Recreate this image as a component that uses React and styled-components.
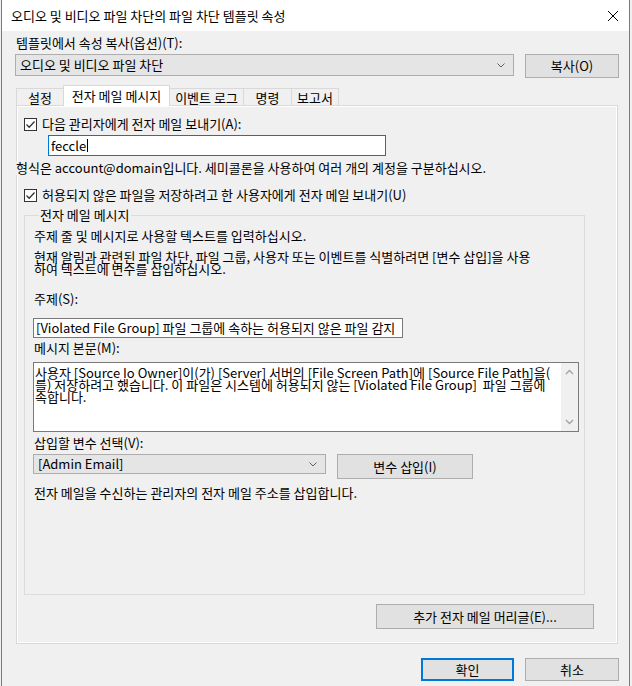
import React from "react";
import styled, { createGlobalStyle } from "styled-components";

const GlobalStyle = createGlobalStyle`
  html, body {
    margin: 0;
    padding: 0;
    background: #f0f0f0;
  }
  body {
    font-family: "Noto Sans CJK KR", "Noto Sans", sans-serif;
    font-size: 13px;
    color: #000;
  }
`;

const Window = styled.div`
  box-sizing: border-box;
  width: 629px;
  min-height: 686px;
  margin-left: 1px;
  border-left: 1px solid #7a7a7a;
  border-right: 1px solid #7a7a7a;
  background: #f0f0f0;
  display: flex;
  flex-direction: column;
`;

const TitleBar = styled.div`
  height: 31px;
  background: #fff;
  display: flex;
  align-items: center;
  justify-content: space-between;
  padding: 0 10px 0 9px;
  line-height: 14px;
`;

const CloseBox = styled.div`
  width: 10px;
  height: 10px;
  display: flex;
  margin-right: 1px;
`;

const Body = styled.div`
  padding: 5px 10px 0 13px;
  display: flex;
  flex-direction: column;
`;

const Text = styled.div`
  line-height: 14px;
  height: 14px;
  white-space: nowrap;
  margin-top: ${(p) => p.$top || 0}px;
  margin-left: ${(p) => p.$left || 0}px;
`;

const Row = styled.div`
  display: flex;
  align-items: flex-start;
  gap: ${(p) => p.$gap || 11}px;
  margin-top: ${(p) => p.$top || 0}px;
  margin-left: ${(p) => p.$left || 0}px;
`;

const Combo = styled.div`
  box-sizing: border-box;
  width: ${(p) => p.$w}px;
  height: ${(p) => p.$h || 21}px;
  background: #e5e5e5;
  border: 1px solid #adadad;
  display: flex;
  align-items: center;
  justify-content: space-between;
  padding: 0 8px 0 4px;
  line-height: 14px;
  svg {
    flex: none;
  }
`;

const Button = styled.div`
  box-sizing: border-box;
  width: ${(p) => p.$w}px;
  height: ${(p) => p.$h || 23}px;
  background: #e1e1e1;
  border: ${(p) => (p.$default ? "2px solid #0078d7" : "1px solid #adadad")};
  display: flex;
  align-items: center;
  justify-content: center;
  line-height: 14px;
  white-space: nowrap;
`;

const TabStrip = styled.div`
  display: flex;
  align-items: flex-end;
  height: 21px;
  margin: 7px 0 0 1px;
  position: relative;
  z-index: 1;
`;

const Tab = styled.div`
  box-sizing: border-box;
  width: ${(p) => p.$w}px;
  height: ${(p) => (p.$active ? 21 : 17)}px;
  margin-bottom: ${(p) => (p.$active ? 0 : 1)}px;
  margin-left: -1px;
  background: ${(p) => (p.$active ? "#fff" : "#f0f0f0")};
  border: 1px solid #d9d9d9;
  border-bottom: none;
  display: flex;
  align-items: center;
  justify-content: center;
  line-height: 14px;
  padding-top: ${(p) => (p.$active ? 0 : 2)}px;
  white-space: nowrap;
  &:first-child {
    margin-left: 0;
  }
`;

const Panel = styled.div`
  box-sizing: border-box;
  height: 539px;
  margin: -1px 1px 0 1px;
  border: 1px solid #d9d9d9;
  box-shadow: inset 0 0 0 1px #fff;
  padding: 11px 7px 0 7px;
  display: flex;
  flex-direction: column;
`;

const CheckRow = styled.div`
  display: flex;
  align-items: center;
  gap: 5px;
  height: 14px;
  line-height: 14px;
  margin-top: ${(p) => p.$top || 0}px;
  white-space: nowrap;
`;

const CheckBox = styled.div`
  box-sizing: border-box;
  width: 13px;
  height: 13px;
  border: 1px solid #333;
  background: #fff;
  display: flex;
  align-items: center;
  justify-content: center;
`;

const Field = styled.div`
  box-sizing: border-box;
  width: ${(p) => p.$w}px;
  height: ${(p) => p.$h}px;
  background: #fff;
  border: 1px solid ${(p) => (p.$focus ? "#0078d7" : "#7a7a7a")};
  margin-top: ${(p) => p.$top || 0}px;
  margin-left: ${(p) => p.$left || 0}px;
  padding: 0 2px;
  display: flex;
  align-items: center;
  line-height: 14px;
  white-space: nowrap;
  overflow: hidden;
`;

const Caret = styled.span`
  display: inline-block;
  width: 1px;
  height: 13px;
  background: #000;
  margin-left: 1px;
`;

const Hint = styled(Text)`
  background: #f0f0f0;
  position: relative;
  align-self: flex-start;
  padding-right: 2px;
`;

const Group = styled.fieldset`
  box-sizing: border-box;
  width: 561px;
  margin: 6px 0 0 0;
  padding: 7px 0 94px 9px;
  border: 1px solid #dcdcdc;
  display: flex;
  flex-direction: column;
`;

const Legend = styled.legend`
  padding: 0 1px;
  margin-left: 5px;
  line-height: 14px;
`;

const Paragraph = styled.div`
  line-height: 12px;
  margin-top: 8px;
  white-space: pre;
`;

const MessageBox = styled.div`
  box-sizing: border-box;
  width: 546px;
  height: 70px;
  margin: 7px 0 0 -1px;
  background: #fff;
  border: 1px solid #7a7a7a;
  display: flex;
`;

const MessageText = styled.div`
  flex: 1;
  padding: 4px 0 0 1px;
  line-height: 12px;
  white-space: pre;
  overflow: hidden;
`;

const ScrollBar = styled.div`
  width: 17px;
  flex: none;
  background: #f0f0f0;
  display: flex;
  flex-direction: column;
  justify-content: space-between;
  align-items: center;
  padding: 6px 0;
`;

const Footer = styled.div`
  display: flex;
  justify-content: flex-end;
  gap: 11px;
  margin-top: 14px;
`;

const Chevron = () => (
  <svg width="8" height="5" viewBox="0 0 8 5">
    <path d="M0.5 0.5 L4 4 L7.5 0.5" fill="none" stroke="#606060" strokeWidth="1" />
  </svg>
);

const Check = () => (
  <svg width="11" height="11" viewBox="0 0 11 11">
    <path d="M1.5 5.5 L4.2 8.2 L9.5 2.5" fill="none" stroke="#333" strokeWidth="1.3" />
  </svg>
);

const Arrow = ({ up }) => (
  <svg width="9" height="6" viewBox="0 0 9 6">
    <path
      d={up ? "M1 5 L4.5 1.5 L8 5" : "M1 1 L4.5 4.5 L8 1"}
      fill="none"
      stroke="#a3a3a3"
      strokeWidth="1.4"
    />
  </svg>
);

const tabs = [
  ["설정", 48],
  ["전자 메일 메시지", 107],
  ["이벤트 로그", 75],
  ["명령", 49],
  ["보고서", 48],
];

const messageLines = [
  "사용자 [Source Io Owner]이(가) [Server] 서버의 [File Screen Path]에 [Source File Path]을(",
  "를) 저장하려고 했습니다. 이 파일은 시스템에 허용되지 않는 [Violated File Group]  파일 그룹에",
  "속합니다.",
];

export default function App() {
  return (
    <>
      <GlobalStyle />
      <Window>
        <TitleBar>
          <span>오디오 및 비디오 파일 차단의 파일 차단 템플릿 속성</span>
          <CloseBox>
            <svg width="10" height="10" viewBox="0 0 10 10">
              <path d="M0 0 L10 10 M10 0 L0 10" stroke="#000" strokeWidth="1" />
            </svg>
          </CloseBox>
        </TitleBar>
        <Body>
          <Text $left={1}>템플릿에서 속성 복사(옵션)(T):</Text>
          <Row $top={4}>
            <Combo $w={499} $h={22}>
              <span>오디오 및 비디오 파일 차단</span>
              <Chevron />
            </Combo>
            <Button $w={94} $h={24}>복사(O)</Button>
          </Row>

          <TabStrip>
            {tabs.map(([label, w], i) => (
              <Tab key={label} $w={w} $active={i === 1}>
                {label}
              </Tab>
            ))}
          </TabStrip>

          <Panel>
            <CheckRow>
              <CheckBox>
                <Check />
              </CheckBox>
              <span>다음 관리자에게 전자 메일 보내기(A):</span>
            </CheckRow>
            <Field $w={338} $h={21} $top={4} $left={24} $focus>
              feccle
              <Caret />
            </Field>
            <Hint $top={5} $left={-8}>
              형식은 account@domain입니다. 세미콜론을 사용하여 여러 개의 계정을 구분하십시오.
            </Hint>
            <CheckRow $top={13}>
              <CheckBox>
                <Check />
              </CheckBox>
              <span>허용되지 않은 파일을 저장하려고 한 사용자에게 전자 메일 보내기(U)</span>
            </CheckRow>

            <Group>
              <Legend>전자 메일 메시지</Legend>
              <Text>주제 줄 및 메시지로 사용할 텍스트를 입력하십시오.</Text>
              <Paragraph>
                {"현재 알림과 관련된 파일 차단, 파일 그룹, 사용자 또는 이벤트를 식별하려면 [변수 삽입]을 사용\n하여 텍스트에 변수를 삽입하십시오."}
              </Paragraph>
              <Text $top={17}>주제(S):</Text>
              <Field $w={370} $h={20} $top={12} $left={-1}>
                [Violated File Group] 파일 그룹에 속하는 허용되지 않은 파일 감지
              </Field>
              <Text $top={3}>메시지 본문(M):</Text>
              <MessageBox>
                <MessageText>{messageLines.join("\n")}</MessageText>
                <ScrollBar>
                  <Arrow up />
                  <Arrow />
                </ScrollBar>
              </MessageBox>
              <Text $top={4}>삽입할 변수 선택(V):</Text>
              <Row $top={4} $left={-1}>
                <Combo $w={293} $h={20}>
                  <span>[Admin Email]</span>
                  <Chevron />
                </Combo>
                <Button $w={136} $h={25}>변수 삽입(I)</Button>
              </Row>
              <Text $top={7}>전자 메일을 수신하는 관리자의 전자 메일 주소를 삽입합니다.</Text>
            </Group>

            <Row $top={9} $left={352}>
              <Button $w={218} $h={25}>추가 전자 메일 머리글(E)...</Button>
            </Row>
          </Panel>

          <Footer>
            <Button $w={93} $h={23} $default>확인</Button>
            <Button $w={94} $h={23}>취소</Button>
          </Footer>
        </Body>
      </Window>
    </>
  );
}
